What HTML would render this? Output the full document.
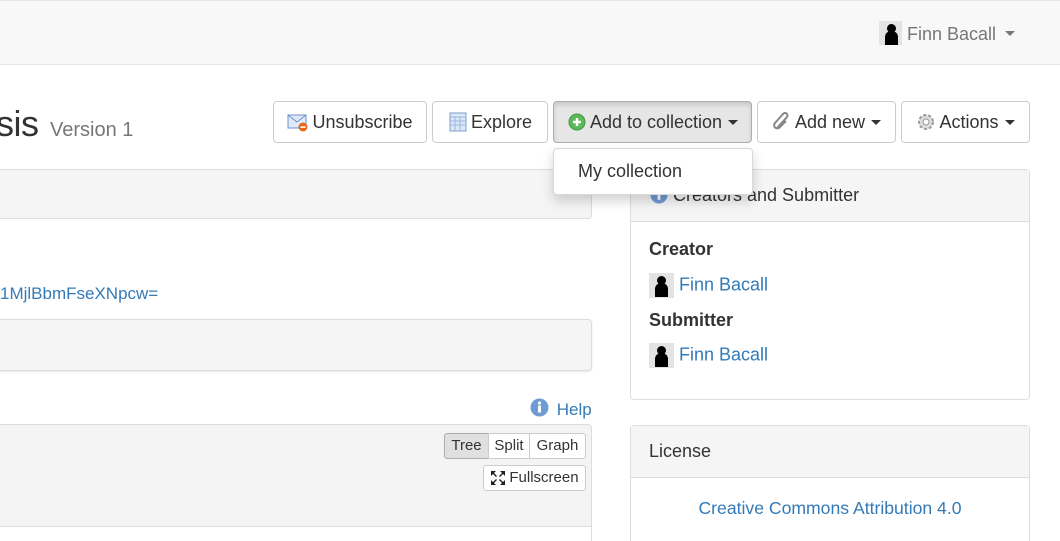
<!DOCTYPE html>
<html><head><meta charset="utf-8"><style>
*{box-sizing:border-box;margin:0;padding:0}
html,body{width:1060px;height:541px;overflow:hidden}
body{background:#fff;font-family:"Liberation Sans",sans-serif;color:#333;position:relative;font-size:18px}
.a{position:absolute}
.nav{left:0;top:0;width:1060px;height:65px;background:#f8f8f8;border-top:1px solid #e7e7e7;border-bottom:1px solid #e7e7e7}
.btn{position:absolute;top:101px;height:42px;border:1px solid #ccc;border-radius:4px;background:#fff;font-size:18px;line-height:40px;white-space:nowrap;display:flex;align-items:center;justify-content:center;gap:3px}
.caret{display:inline-block;width:0;height:0;border-left:5px solid transparent;border-right:5px solid transparent;border-top:5px solid #333;margin-left:3px}
.panel{position:absolute;border:1px solid #ddd;border-radius:4px;background:#fff}
.ph{background:#f5f5f5;border-bottom:1px solid #ddd}
.link{color:#337ab7}
.av{display:inline-block;width:25px;height:25px;background:#e3e3e3;position:relative;vertical-align:middle}
.av::before{content:"";position:absolute;left:8px;top:3px;width:9px;height:9px;border-radius:50%;background:#000}
.av::after{content:"";position:absolute;left:6px;top:10px;width:13px;height:14px;border-radius:6px 6px 0 0;background:#000}
.sb{position:absolute;height:26px;border:1px solid #ccc;background:#fff;font-size:15px;line-height:24px;text-align:center}
</style></head><body>
<div class="a nav"></div>
<div class="a" style="left:879px;top:21px;font-size:18px;color:#777;line-height:24px"><span class="av" style="width:23px;height:24px;vertical-align:-5px"></span> Finn Bacall <span class="caret" style="border-top-color:#777;vertical-align:4px;margin-left:4px"></span></div>

<div class="a" style="left:-4px;top:100px;font-size:36px;line-height:48px;letter-spacing:-0.5px">sis <span style="font-size:20px;color:#777;margin-left:2px;letter-spacing:0">Version 1</span></div>

<div class="btn" style="left:273px;width:154px"><svg width="22" height="20" viewBox="0 0 22 20"><rect x="1" y="3" width="18" height="13" fill="#dfe9f7" stroke="#6c93d0"/><path d="M1 3l9 7 9-7" fill="none" stroke="#6c93d0"/><circle cx="16" cy="15" r="4.5" fill="#e8661a"/><rect x="13.5" y="14.3" width="5" height="1.6" fill="#fff"/></svg>Unsubscribe</div>
<div class="btn" style="left:432px;width:116px"><svg width="20" height="20" viewBox="0 0 20 20"><rect x="2" y="1" width="16" height="18" fill="#dde8f6" stroke="#7b9cd3"/><path d="M2 5h16M2 9h16M2 13h16M7 5v14M12 5v14" stroke="#9db6e0"/></svg>Explore</div>
<div class="btn" style="left:553px;width:199px;background:#e6e6e6;border-color:#adadad;box-shadow:inset 0 3px 5px rgba(0,0,0,.125)"><svg width="20" height="20" viewBox="0 0 20 20"><circle cx="10" cy="10" r="8" fill="#5cb85c" stroke="#3e9a3e"/><path d="M10 6v8M6 10h8" stroke="#fff" stroke-width="2.4"/></svg>Add to collection<span class="caret"></span></div>
<div class="btn" style="left:757px;width:139px"><svg width="20" height="20" viewBox="0 0 20 20"><path d="M5 16L15 5a2.5 2.5 0 0 0-3.5-3.5L3 11a3 3 0 0 0 4.5 4.5L14 9" fill="none" stroke="#888" stroke-width="2"/></svg>Add new<span class="caret"></span></div>
<div class="btn" style="left:901px;width:129px"><svg width="20" height="20" viewBox="0 0 20 20"><circle cx="10" cy="10" r="7" fill="#ddd" stroke="#999" stroke-width="2" stroke-dasharray="3 2"/><circle cx="10" cy="10" r="3" fill="#fff" stroke="#999"/></svg>Actions<span class="caret"></span></div>

<div class="panel" style="left:-5px;top:169px;width:597px;height:50px;background:#f5f5f5"></div>
<div class="a link" style="left:0;top:284px;font-size:17px">1MjlBbmFseXNpcw=</div>
<div class="panel" style="left:-5px;top:319px;width:597px;height:52px;background:#f5f5f5;box-shadow:0 1px 2px rgba(0,0,0,.1)"></div>
<div class="a link" style="left:530px;top:398px;font-size:17px;line-height:20px"><svg width="19" height="19" viewBox="0 0 19 19" style="vertical-align:-2px;margin-right:3px"><circle cx="9.5" cy="9.5" r="9" fill="#6f9bd4"/><rect x="8" y="7.5" width="3" height="7" fill="#fff"/><circle cx="9.5" cy="5" r="1.6" fill="#fff"/></svg> Help</div>
<div class="panel" style="left:-5px;top:424px;width:597px;height:130px;background:#f4f4f4;border-radius:4px"><div style="position:absolute;left:0;right:0;top:101px;bottom:0;background:#fff;border-top:1px solid #ddd"></div></div>
<div class="sb" style="left:444px;top:433px;width:45px;background:#e0e0e0;border-color:#adadad;border-radius:3px 0 0 3px">Tree</div>
<div class="sb" style="left:488px;top:433px;width:42px">Split</div>
<div class="sb" style="left:529px;top:433px;width:57px;border-radius:0 3px 3px 0">Graph</div>
<div class="sb" style="left:483px;top:465px;width:103px;border-radius:3px;display:flex;align-items:center;justify-content:center;gap:3px"><svg width="16" height="16" viewBox="0 0 16 16"><path d="M1 1h5L4 3l3 3-1 1-3-3-2 2zM15 1v5l-2-2-3 3-1-1 3-3-2-2zM1 15v-5l2 2 3-3 1 1-3 3 2 2zM15 15h-5l2-2-3-3 1-1 3 3 2-2z" fill="#222"/></svg>Fullscreen</div>

<div class="panel" style="left:630px;top:169px;width:400px;height:231px"><div class="ph" style="height:52px"></div>
<div class="a" style="left:18px;top:69px;font-weight:bold;font-size:18px">Creator</div>
<div class="a" style="left:18px;top:103px"><span class="av"></span> <span class="link">Finn Bacall</span></div>
<div class="a" style="left:18px;top:140px;font-weight:bold;font-size:18px">Submitter</div>
<div class="a" style="left:18px;top:173px"><span class="av"></span> <span class="link">Finn Bacall</span></div>
</div>
<div class="a" style="left:650px;top:184px;font-size:18px;line-height:22px"><svg width="18" height="18" viewBox="0 0 19 19" style="vertical-align:-3px"><circle cx="9.5" cy="9.5" r="9" fill="#6f9bd4"/><rect x="8" y="7.5" width="3" height="7" fill="#fff"/></svg> Creators and Submitter</div>

<div class="panel" style="left:630px;top:425px;width:400px;height:130px"><div class="ph" style="height:52px;padding:15px 18px;font-size:18px">License</div>
<div class="link" style="text-align:center;margin-top:20px;font-size:17.6px">Creative Commons Attribution 4.0</div></div>

<div class="a" style="left:553px;top:148px;width:200px;height:47px;background:#fff;border:1px solid rgba(0,0,0,.15);border-radius:4px;box-shadow:0 6px 12px rgba(0,0,0,.175);padding:12px 24px;font-size:18px">My collection</div>
</body></html>
